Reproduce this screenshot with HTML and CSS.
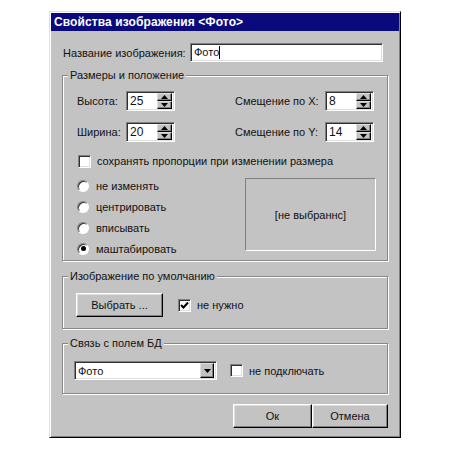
FILE: index.html
```html
<!DOCTYPE html>
<html lang="ru">
<head>
<meta charset="utf-8">
<title>Свойства изображения</title>
<link rel="stylesheet" href="styles.css">
</head>
<body>
<div class="dialog">
  <div class="titlebar">Свойства изображения &lt;Фото&gt;</div>
  <div class="content">
    <div class="name-row">
      <span class="name-label">Название изображения:</span>
      <div class="field name-field">Фото<span class="caret"></span></div>
    </div>

    <div class="group g1">
      <div class="legend">Размеры и положение</div>
      <div class="spin-row first">
        <span class="lbl lbl-a">Высота:</span>
        <div class="field spin"><span class="val">25</span>
          <div class="spin-btns">
            <div class="sbtn"><svg width="7" height="4" viewBox="0 0 7 4"><path d="M3.5 0 L7 4 L0 4Z" fill="#000"/></svg></div>
            <div class="sbtn"><svg width="7" height="4" viewBox="0 0 7 4"><path d="M0 0 L7 0 L3.5 4Z" fill="#000"/></svg></div>
          </div>
        </div>
        <span class="lbl lbl-b">Смещение по X:</span>
        <div class="field spin"><span class="val">8</span>
          <div class="spin-btns">
            <div class="sbtn"><svg width="7" height="4" viewBox="0 0 7 4"><path d="M3.5 0 L7 4 L0 4Z" fill="#000"/></svg></div>
            <div class="sbtn"><svg width="7" height="4" viewBox="0 0 7 4"><path d="M0 0 L7 0 L3.5 4Z" fill="#000"/></svg></div>
          </div>
        </div>
      </div>
      <div class="spin-row second">
        <span class="lbl lbl-a">Ширина:</span>
        <div class="field spin"><span class="val">20</span>
          <div class="spin-btns">
            <div class="sbtn"><svg width="7" height="4" viewBox="0 0 7 4"><path d="M3.5 0 L7 4 L0 4Z" fill="#000"/></svg></div>
            <div class="sbtn"><svg width="7" height="4" viewBox="0 0 7 4"><path d="M0 0 L7 0 L3.5 4Z" fill="#000"/></svg></div>
          </div>
        </div>
        <span class="lbl lbl-b">Смещение по Y:</span>
        <div class="field spin"><span class="val">14</span>
          <div class="spin-btns">
            <div class="sbtn"><svg width="7" height="4" viewBox="0 0 7 4"><path d="M3.5 0 L7 4 L0 4Z" fill="#000"/></svg></div>
            <div class="sbtn"><svg width="7" height="4" viewBox="0 0 7 4"><path d="M0 0 L7 0 L3.5 4Z" fill="#000"/></svg></div>
          </div>
        </div>
      </div>
      <div class="check-row keep">
        <span class="chk"></span>
        <span class="chk-label">сохранять пропорции при изменении размера</span>
      </div>
      <div class="mode-area">
        <div class="radios">
          <div class="radio-row"><span class="radio"></span><span class="radio-label">не изменять</span></div>
          <div class="radio-row"><span class="radio"></span><span class="radio-label">центрировать</span></div>
          <div class="radio-row"><span class="radio"></span><span class="radio-label">вписывать</span></div>
          <div class="radio-row"><span class="radio on"></span><span class="radio-label">маштабировать</span></div>
        </div>
        <div class="preview">[не выбраннс]</div>
      </div>
    </div>

    <div class="group g2">
      <div class="legend">Изображение по умолчанию</div>
      <div class="g2-row">
        <div class="btn choose">Выбрать ...</div>
        <span class="chk checked"><svg width="9" height="9" viewBox="0 0 9 9"><path d="M1 4 L3.5 6.5 L8 1.5" fill="none" stroke="#000" stroke-width="2"/></svg></span>
        <span class="chk-label">не нужно</span>
      </div>
    </div>

    <div class="group g3">
      <div class="legend">Связь с полем БД</div>
      <div class="g3-row">
        <div class="field combo"><span class="val">Фото</span>
          <div class="sbtn drop"><svg width="7" height="4" viewBox="0 0 7 4"><path d="M0 0 L7 0 L3.5 4Z" fill="#000"/></svg></div>
        </div>
        <span class="chk"></span>
        <span class="chk-label">не подключать</span>
      </div>
    </div>

    <div class="actions">
      <div class="btn ok">Ок</div>
      <div class="btn cancel">Отмена</div>
    </div>
  </div>
</div>
</body>
</html>
```

FILE: styles.css
```css
* { box-sizing: border-box; }
html, body { margin: 0; padding: 0; background: #fff; }
body {
  font-family: "Liberation Sans", Arial, sans-serif;
  font-size: 11px;
  color: #111;
  white-space: nowrap;
}
.dialog {
  margin: 11px 0 0 49px;
  width: 352px;
  height: 427px;
  background: #c3c3c3;
  border: 1px solid;
  border-color: #dfdfdf #000 #000 #dfdfdf;
  box-shadow: inset 1px 1px #fff, inset -1px -1px #808080;
  padding: 1px;
  display: flex;
  flex-direction: column;
}
.titlebar {
  height: 18px;
  background: #0a0a7c;
  color: #fff;
  font-weight: bold;
  font-size: 12px;
  line-height: 18px;
  padding-left: 3px;
  letter-spacing: 0.1px;
}
.content {
  padding: 0 11px;
  display: flex;
  flex-direction: column;
}
.name-row {
  margin-top: 12px;
  height: 19px;
  display: flex;
  align-items: center;
  padding-left: 1px;
}
.name-label { width: 127px; }
.field {
  background: #fff;
  border: 1px solid;
  border-color: #808080 #fff #fff #808080;
  box-shadow: inset 1px 1px #303030, inset -1px -1px #dfdfdf;
}
.name-field {
  width: 193px;
  height: 19px;
  padding: 0 3px;
  line-height: 17px;
  display: flex;
  align-items: center;
}
.caret {
  display: inline-block;
  width: 1px;
  height: 13px;
  background: #000;
}
.group {
  --pad: 0px;
  border: 1px solid #888;
  box-shadow: inset 1px 1px #fff, 1px 1px 0 #fff;
  display: flex;
  flex-direction: column;
  padding-left: var(--pad);
}
.legend {
  height: 14px;
  line-height: 14px;
  margin: -8px 0 0 calc(5px - var(--pad));
  padding: 0 2px;
  align-self: flex-start;
  background: #c3c3c3;
}
.g1 { --pad: 14px; margin-top: 13px; height: 186px; }
.spin-row {
  display: flex;
  align-items: center;
  height: 20px;
}
.spin-row.first { margin-top: 9px; }
.spin-row.second { margin-top: 11px; }
.lbl-a { width: 49px; }
.lbl-b { width: 90px; margin-left: 60px; }
.spin {
  width: 49px;
  height: 20px;
  display: flex;
  align-items: center;
  justify-content: space-between;
  padding: 2px 2px 2px 3px;
  font-size: 12px;
}
.spin .val { line-height: 16px; }
.spin-btns {
  display: flex;
  flex-direction: column;
  width: 15px;
  height: 16px;
}
.sbtn {
  flex: 1;
  background: #c3c3c3;
  border: 1px solid;
  border-color: #dfdfdf #000 #000 #dfdfdf;
  box-shadow: inset -1px -1px #808080;
  display: flex;
  align-items: center;
  justify-content: center;
}
.check-row {
  display: flex;
  align-items: center;
  height: 14px;
}
.keep { margin-top: 12px; margin-left: 1px; }
.chk {
  width: 13px;
  height: 13px;
  flex: 0 0 13px;
  background: #fff;
  border: 1px solid;
  border-color: #808080 #fff #fff #808080;
  box-shadow: inset 1px 1px #303030, inset -1px -1px #dfdfdf;
  display: flex;
  align-items: center;
  justify-content: center;
}
.chk-label { margin-left: 6px; }
.mode-area {
  margin-top: 7px;
  display: flex;
}
.radios {
  flex: 0 0 168px;
  display: flex;
  flex-direction: column;
}
.radio-row {
  height: 21px;
  display: flex;
  align-items: center;
}
.radio {
  width: 12px;
  height: 12px;
  border-radius: 50%;
  background: #fff;
  border: 1px solid;
  border-color: #808080 #fff #fff #808080;
  box-shadow: inset 1px 1px #303030;
  display: flex;
  align-items: center;
  justify-content: center;
}
.radio.on::after {
  content: "";
  width: 5px;
  height: 5px;
  border-radius: 50%;
  background: #000;
}
.radio-label { margin-left: 7px; }
.preview {
  margin-top: 3px;
  width: 131px;
  height: 73px;
  border: 1px solid;
  border-color: #808080 #fff #fff #808080;
  display: flex;
  align-items: center;
  justify-content: center;
}
.g2 { --pad: 13px; margin-top: 15px; height: 53px; }
.g2-row {
  margin-top: 10px;
  display: flex;
  align-items: center;
}
.btn {
  background: #c3c3c3;
  border: 1px solid;
  border-color: #fff #000 #000 #fff;
  box-shadow: inset -1px -1px #808080, inset 1px 1px #dfdfdf;
  display: flex;
  align-items: center;
  justify-content: center;
  height: 24px;
}
.choose { width: 87px; }
.g2-row .chk { margin-left: 15px; }
.g3 { --pad: 11px; margin-top: 14px; height: 51px; }
.g3-row {
  margin-top: 11px;
  display: flex;
  align-items: center;
}
.combo {
  width: 143px;
  height: 19px;
  display: flex;
  align-items: center;
  justify-content: space-between;
  padding: 2px 2px 2px 3px;
}
.drop { flex: 0 0 14px; height: 15px; }
.g3-row .chk { margin-left: 13px; }
.actions {
  margin-top: 10px;
  display: flex;
  justify-content: flex-end;
}
.ok { width: 79px; }
.cancel { width: 76px; }
```
